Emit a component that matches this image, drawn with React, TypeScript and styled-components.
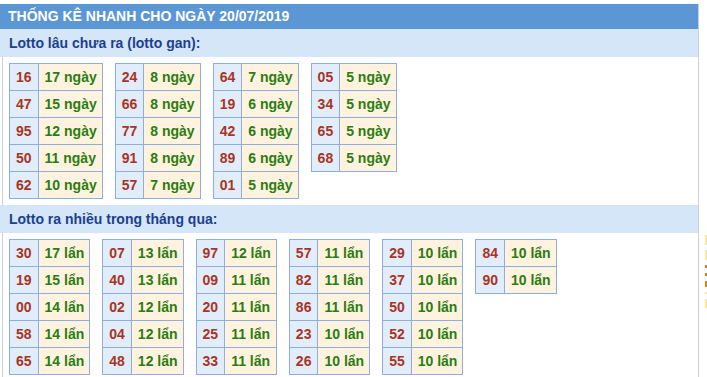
import React from 'react';
import styled, { createGlobalStyle } from 'styled-components';

const GlobalStyle = createGlobalStyle`
  body {
    margin: 0;
    background: #ffffff;
    font-family: "Liberation Sans", Arial, sans-serif;
  }
`;

type Pair = [string, string];

const gan: Pair[][] = [
    [['16', '17 ngày'], ['47', '15 ngày'], ['95', '12 ngày'], ['50', '11 ngày'], ['62', '10 ngày']],
    [['24', '8 ngày'], ['66', '8 ngày'], ['77', '8 ngày'], ['91', '8 ngày'], ['57', '7 ngày']],
    [['64', '7 ngày'], ['19', '6 ngày'], ['42', '6 ngày'], ['89', '6 ngày'], ['01', '5 ngày']],
    [['05', '5 ngày'], ['34', '5 ngày'], ['65', '5 ngày'], ['68', '5 ngày']],
];

const nhieu: Pair[][] = [
    [['30', '17 lẩn'], ['19', '15 lẩn'], ['00', '14 lẩn'], ['58', '14 lẩn'], ['65', '14 lẩn']],
    [['07', '13 lẩn'], ['40', '13 lẩn'], ['02', '12 lẩn'], ['04', '12 lẩn'], ['48', '12 lẩn']],
    [['97', '12 lẩn'], ['09', '11 lẩn'], ['20', '11 lẩn'], ['25', '11 lẩn'], ['33', '11 lẩn']],
    [['57', '11 lẩn'], ['82', '11 lẩn'], ['86', '11 lẩn'], ['23', '10 lẩn'], ['26', '10 lẩn']],
    [['29', '10 lẩn'], ['37', '10 lẩn'], ['50', '10 lẩn'], ['52', '10 lẩn'], ['55', '10 lẩn']],
    [['84', '10 lẩn'], ['90', '10 lẩn']],
];

function Group({ tables }: { tables: Pair[][] }) {
    return (
        <Tables>
            {tables.map((rows, i) => (
                <Table key={i}>
                    <tbody>
                        {rows.map(([num, val]) => (
                            <tr key={num}>
                                <Num>{num}</Num>
                                <Val>{val}</Val>
                            </tr>
                        ))}
                    </tbody>
                </Table>
            ))}
        </Tables>
    );
}

export default function App() {
    return (
        <>
            <GlobalStyle />
            <Page>
                <Main>
                    <Header>THỐNG KÊ NHANH CHO NGÀY 20/07/2019</Header>
                    <SubHeader>Lotto lâu chưa ra (lotto gan):</SubHeader>
                    <Group tables={gan} />
                    <SubHeader>Lotto ra nhiều trong tháng qua:</SubHeader>
                    <Group tables={nhieu} />
                </Main>
                <Aside>
                    <Mark h={10} />
                    <Mark h={10} />
                    <Mark h={3} dark />
                    <Mark h={3} dark />
                    <Mark h={6} dark />
                    <Mark h={2} />
                    <Mark h={9} />
                </Aside>
            </Page>
        </>
    );
}

const Page = styled.div`
    display: flex;
    align-items: flex-start;
    padding-top: 4px;
`;

const Main = styled.div`
    width: 699px;
    flex: none;
    border-right: 1px solid #c6d1de;
    box-sizing: border-box;
    min-height: 373px;
`;

const Header = styled.div`
    height: 25px;
    line-height: 25px;
    padding-left: 8px;
    background: #5b96d5;
    color: #ffffff;
    font-size: 14px;
    font-weight: bold;
`;

const SubHeader = styled.div`
    height: 28px;
    line-height: 28px;
    padding-left: 9px;
    background: #d4e6f8;
    color: #1d3f8f;
    font-size: 14px;
    font-weight: bold;
`;

const Tables = styled.div`
    display: flex;
    align-items: flex-start;
    gap: 12px;
    margin-left: 2px;
    padding: 6px 6px;
    border-left: 1px solid #c6d1de;
`;

const Table = styled.table`
    border-collapse: collapse;
    font-size: 14px;
    font-weight: bold;

    td {
        height: 26px;
        border: 1px solid #8eaedf;
        white-space: nowrap;
    }
`;

const Num = styled.td`
    width: 15px;
    padding: 0 6px;
    background: #e2edfb;
    color: #a8351f;
    text-align: center;
`;

const Val = styled.td`
    padding: 0 5px 0 6px;
    background: #fff3e0;
    color: #2a7d10;
`;

const Aside = styled.div`
    display: flex;
    flex-direction: column;
    gap: 5px;
    margin-left: 6px;
    padding-top: 231px;
`;

const Mark = styled.div<{ h: number; dark?: boolean }>`
    width: 3px;
    height: ${(p) => p.h}px;
    background: ${(p) => (p.dark ? '#c9892a' : '#fbe7a6')};
`;
